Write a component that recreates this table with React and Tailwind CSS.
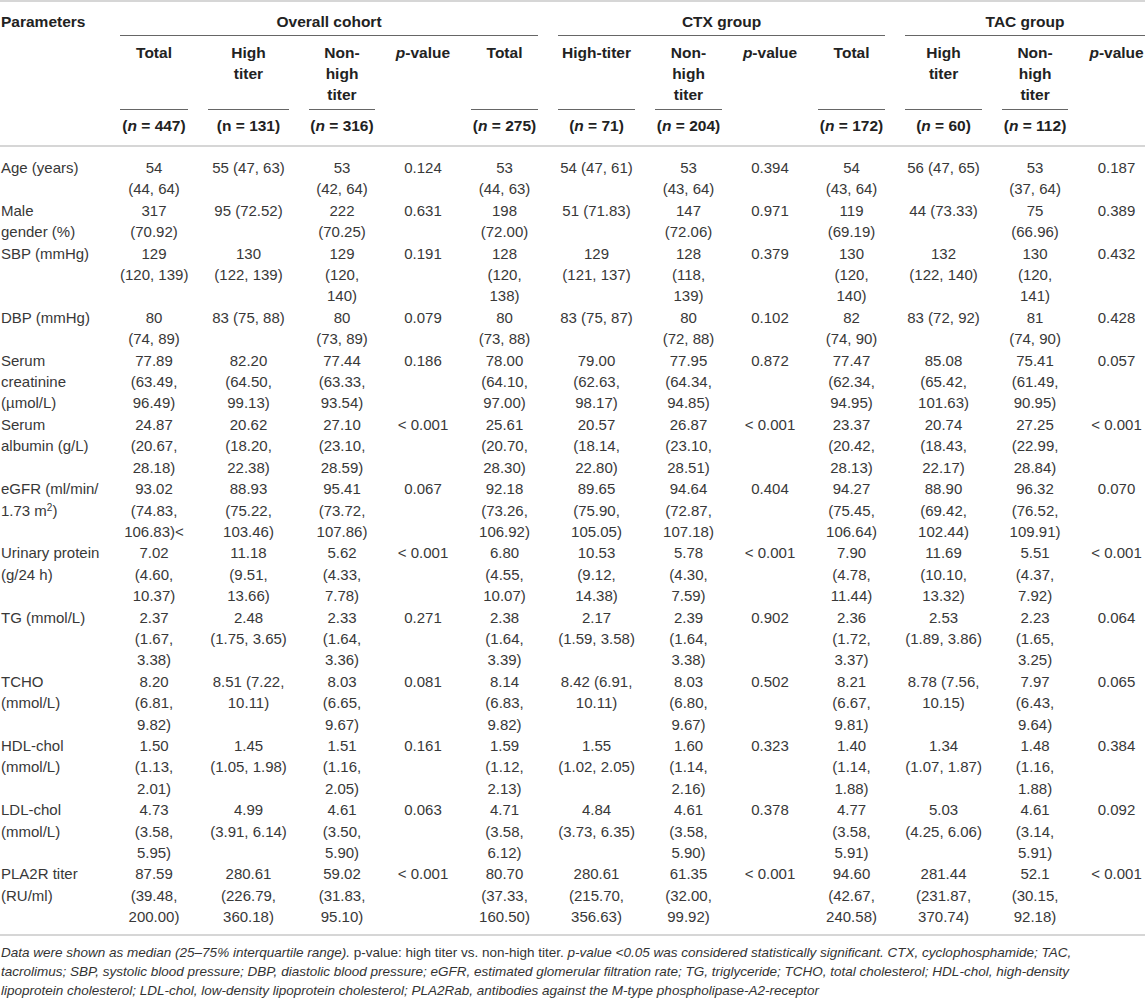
import React from 'react';

const colWidths = [110, 88, 101, 86, 76, 87, 97, 87, 76, 87, 97, 86, 67];

const rows = [
  {
    label: ['Age (years)'],
    cells: ['54|(44, 64)', '55 (47, 63)', '53|(42, 64)', '0.124', '53|(44, 63)', '54 (47, 61)', '53|(43, 64)', '0.394', '54|(43, 64)', '56 (47, 65)', '53|(37, 64)', '0.187'],
  },
  {
    label: ['Male', 'gender (%)'],
    cells: ['317|(70.92)', '95 (72.52)', '222|(70.25)', '0.631', '198|(72.00)', '51 (71.83)', '147|(72.06)', '0.971', '119|(69.19)', '44 (73.33)', '75|(66.96)', '0.389'],
  },
  {
    label: ['SBP (mmHg)'],
    cells: ['129|(120, 139)', '130|(122, 139)', '129|(120,|140)', '0.191', '128|(120,|138)', '129|(121, 137)', '128|(118,|139)', '0.379', '130|(120,|140)', '132|(122, 140)', '130|(120,|141)', '0.432'],
  },
  {
    label: ['DBP (mmHg)'],
    cells: ['80|(74, 89)', '83 (75, 88)', '80|(73, 89)', '0.079', '80|(73, 88)', '83 (75, 87)', '80|(72, 88)', '0.102', '82|(74, 90)', '83 (72, 92)', '81|(74, 90)', '0.428'],
  },
  {
    label: ['Serum', 'creatinine', '(µmol/L)'],
    cells: ['77.89|(63.49,|96.49)', '82.20|(64.50,|99.13)', '77.44|(63.33,|93.54)', '0.186', '78.00|(64.10,|97.00)', '79.00|(62.63,|98.17)', '77.95|(64.34,|94.85)', '0.872', '77.47|(62.34,|94.95)', '85.08|(65.42,|101.63)', '75.41|(61.49,|90.95)', '0.057'],
  },
  {
    label: ['Serum', 'albumin (g/L)'],
    cells: ['24.87|(20.67,|28.18)', '20.62|(18.20,|22.38)', '27.10|(23.10,|28.59)', '< 0.001', '25.61|(20.70,|28.30)', '20.57|(18.14,|22.80)', '26.87|(23.10,|28.51)', '< 0.001', '23.37|(20.42,|28.13)', '20.74|(18.43,|22.17)', '27.25|(22.99,|28.84)', '< 0.001'],
  },
  {
    label: ['eGFR (ml/min/', <>1.73 m<sup className="text-[10px]">2</sup>)</>],
    cells: ['93.02|(74.83,|106.83)<', '88.93|(75.22,|103.46)', '95.41|(73.72,|107.86)', '0.067', '92.18|(73.26,|106.92)', '89.65|(75.90,|105.05)', '94.64|(72.87,|107.18)', '0.404', '94.27|(75.45,|106.64)', '88.90|(69.42,|102.44)', '96.32|(76.52,|109.91)', '0.070'],
  },
  {
    label: ['Urinary protein', '(g/24 h)'],
    cells: ['7.02|(4.60,|10.37)', '11.18|(9.51,|13.66)', '5.62|(4.33,|7.78)', '< 0.001', '6.80|(4.55,|10.07)', '10.53|(9.12,|14.38)', '5.78|(4.30,|7.59)', '< 0.001', '7.90|(4.78,|11.44)', '11.69|(10.10,|13.32)', '5.51|(4.37,|7.92)', '< 0.001'],
  },
  {
    label: ['TG (mmol/L)'],
    cells: ['2.37|(1.67,|3.38)', '2.48|(1.75, 3.65)', '2.33|(1.64,|3.36)', '0.271', '2.38|(1.64,|3.39)', '2.17|(1.59, 3.58)', '2.39|(1.64,|3.38)', '0.902', '2.36|(1.72,|3.37)', '2.53|(1.89, 3.86)', '2.23|(1.65,|3.25)', '0.064'],
  },
  {
    label: ['TCHO', '(mmol/L)'],
    cells: ['8.20|(6.81,|9.82)', '8.51 (7.22,|10.11)', '8.03|(6.65,|9.67)', '0.081', '8.14|(6.83,|9.82)', '8.42 (6.91,|10.11)', '8.03|(6.80,|9.67)', '0.502', '8.21|(6.67,|9.81)', '8.78 (7.56,|10.15)', '7.97|(6.43,|9.64)', '0.065'],
  },
  {
    label: ['HDL-chol', '(mmol/L)'],
    cells: ['1.50|(1.13,|2.01)', '1.45|(1.05, 1.98)', '1.51|(1.16,|2.05)', '0.161', '1.59|(1.12,|2.13)', '1.55|(1.02, 2.05)', '1.60|(1.14,|2.16)', '0.323', '1.40|(1.14,|1.88)', '1.34|(1.07, 1.87)', '1.48|(1.16,|1.88)', '0.384'],
  },
  {
    label: ['LDL-chol', '(mmol/L)'],
    cells: ['4.73|(3.58,|5.95)', '4.99|(3.91, 6.14)', '4.61|(3.50,|5.90)', '0.063', '4.71|(3.58,|6.12)', '4.84|(3.73, 6.35)', '4.61|(3.58,|5.90)', '0.378', '4.77|(3.58,|5.91)', '5.03|(4.25, 6.06)', '4.61|(3.14,|5.91)', '0.092'],
  },
  {
    label: ['PLA2R titer', '(RU/ml)'],
    cells: ['87.59|(39.48,|200.00)', '280.61|(226.79,|360.18)', '59.02|(31.83,|95.10)', '< 0.001', '80.70|(37.33,|160.50)', '280.61|(215.70,|356.63)', '61.35|(32.00,|99.92)', '< 0.001', '94.60|(42.67,|240.58)', '281.44|(231.87,|370.74)', '52.1|(30.15,|92.18)', '< 0.001'],
  },
];

// sub-header cells under the group row
const subHeads = [
  { lines: ['Total'], n: '447' },
  { lines: ['High', 'titer'], n: '131', upright: true },
  { lines: ['Non-', 'high', 'titer'], n: '316' },
  { p: true },
  { lines: ['Total'], n: '275' },
  { lines: ['High-titer'], n: '71' },
  { lines: ['Non-', 'high', 'titer'], n: '204' },
  { p: true },
  { lines: ['Total'], n: '172' },
  { lines: ['High', 'titer'], n: '60' },
  { lines: ['Non-', 'high', 'titer'], n: '112' },
  { p: true },
];

const Lines = ({ items }) => items.map((l, i) => (
  <React.Fragment key={i}>
    {i > 0 && <br />}
    {l}
  </React.Fragment>
));

const PValue = () => (
  <>
    <i>p</i>-value
  </>
);

export default function App() {
  return (
    <div className="w-[1145px] bg-white text-[#383838] font-['Liberation_Sans',Arial,sans-serif]">
      <table className="table-fixed w-[1145px] border-collapse border-t-2 border-[#d6d6d6]">
        <colgroup>
          {colWidths.map((w, i) => (
            <col key={i} style={{ width: w }} />
          ))}
        </colgroup>
        <thead className="text-[15.5px] font-bold text-[#222] leading-[21px] border-b-2 border-[#d6d6d6]">
          <tr>
            <th className="p-0 pl-[1px] text-left align-top">
              <div className="h-[34px] pt-[9px]">Parameters</div>
            </th>
            <th colSpan={5} className="p-0 px-[10px] align-top">
              <div className="h-[34px] pt-[9px] border-b border-[#666]">Overall cohort</div>
            </th>
            <th colSpan={4} className="p-0 px-[10px] align-top">
              <div className="h-[34px] pt-[9px] border-b border-[#666]">CTX group</div>
            </th>
            <th colSpan={3} className="p-0 pl-[10px] align-top">
              <div className="h-[34px] pt-[9px] border-b border-[#666]">TAC group</div>
            </th>
          </tr>
          <tr>
            <th className="p-0" />
            {subHeads.map((h, i) => (
              <th key={i} className={i === 11 ? 'p-0 pt-[6px] pl-[10px] align-top whitespace-nowrap' : 'p-0 pt-[6px] px-[10px] align-top whitespace-nowrap'}>
                {h.p ? (
                  <div className="h-[68px]"><PValue /></div>
                ) : (
                  <div className="h-[68px] border-b border-[#666]"><Lines items={h.lines} /></div>
                )}
              </th>
            ))}
          </tr>
          <tr>
            <th className="p-0" />
            {subHeads.map((h, i) => (
              <th key={i} className="p-0 pt-[5px] pb-[9px] px-[10px] whitespace-nowrap">
                {h.p ? null : (
                  <>
                    ({h.upright ? 'n' : <i>n</i>} = {h.n})
                  </>
                )}
              </th>
            ))}
          </tr>
        </thead>
        <tbody className="text-[15px] leading-[21.4px] border-b-2 border-[#d6d6d6]">
          {rows.map((r, ri) => {
            const pad = ri === 0 ? 'pt-[10px]' : ri === rows.length - 1 ? 'pb-[6px]' : '';
            return (
              <tr key={ri}>
                <td className={`p-0 pl-[1px] align-top text-left whitespace-nowrap ${pad}`}>
                  <Lines items={r.label} />
                </td>
                {r.cells.map((c, ci) => (
                  <td
                    key={ci}
                    className={`p-0 align-top text-center whitespace-nowrap ${ci === 11 ? 'pl-[10px]' : 'px-[10px]'} ${pad}`}
                  >
                    <Lines items={c.split('|')} />
                  </td>
                ))}
              </tr>
            );
          })}
        </tbody>
      </table>
      <div className="pt-[7px] pl-[1px] text-[13.5px] leading-[19.3px] text-[#333] whitespace-nowrap">
        <i>Data were shown as median (25–75% interquartile range). </i>
        p-value: high titer vs. non-high titer.
        <i> p-value &lt;0.05 was considered statistically significant. CTX, cyclophosphamide; TAC,</i>
        <br />
        <i>tacrolimus; SBP, systolic blood pressure; DBP, diastolic blood pressure; eGFR, estimated glomerular filtration rate; TG, triglyceride; TCHO, total cholesterol; HDL-chol, high-density</i>
        <br />
        <i>lipoprotein cholesterol; LDL-chol, low-density lipoprotein cholesterol; PLA2Rab, antibodies against the M-type phospholipase-A2-receptor</i>
      </div>
    </div>
  );
}
